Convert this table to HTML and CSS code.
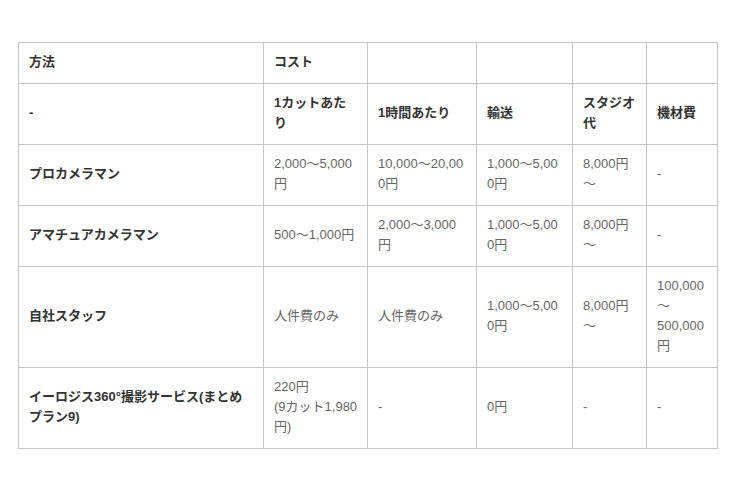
FILE: index.html
```html
<!DOCTYPE html>
<html lang="ja">
<head>
<meta charset="utf-8">
<link rel="stylesheet" href="styles.css">
</head>
<body>
<div class="page">
<table class="cost">
<colgroup>
<col class="c1"><col class="c2"><col class="c3"><col class="c4"><col class="c5"><col class="c6">
</colgroup>
<tr><th>方法</th><th>コスト</th><th></th><th></th><th></th><th></th></tr>
<tr><th>-</th><th>1カットあた<br>り</th><th>1時間あたり</th><th>輸送</th><th>スタジオ<br>代</th><th>機材費</th></tr>
<tr><th>プロカメラマン</th><td>2,000〜5,000<br>円</td><td>10,000〜20,00<br>0円</td><td>1,000〜5,00<br>0円</td><td>8,000円<br>〜</td><td>-</td></tr>
<tr><th>アマチュアカメラマン</th><td>500〜1,000円</td><td>2,000〜3,000<br>円</td><td>1,000〜5,00<br>0円</td><td>8,000円<br>〜</td><td>-</td></tr>
<tr><th>自社スタッフ</th><td>人件費のみ</td><td>人件費のみ</td><td>1,000〜5,00<br>0円</td><td>8,000円<br>〜</td><td>100,000<br>〜<br>500,000<br>円</td></tr>
<tr><th>イーロジス360°撮影サービス(まとめ<br>プラン9)</th><td>220円<br>(9カット1,980<br>円)</td><td>-</td><td>0円</td><td>-</td><td>-</td></tr>
</table>
</div>
</body>
</html>
```
FILE: styles.css
```css
html, body {
  margin: 0;
  padding: 0;
  background: #fff;
}
.page {
  padding: 42px 0 0 18px;
}
.cost {
  border-collapse: collapse;
  table-layout: fixed;
  width: 699px;
  font-family: "Liberation Sans", "Noto Sans CJK JP", sans-serif;
  font-size: 13px;
  line-height: 20px;
}
.c1 { width: 245px; }
.c2 { width: 104px; }
.c3 { width: 109px; }
.c4 { width: 96px; }
.c5 { width: 74px; }
.c6 { width: 71px; }
.cost th, .cost td {
  border: 1px solid #c4c4c4;
  padding: 9px 10px 11px 10px;
  text-align: left;
  vertical-align: middle;
  white-space: nowrap;
  overflow: hidden;
}
.cost th {
  font-weight: bold;
  color: #333;
}
.cost td {
  font-weight: normal;
  color: #666;
}
.cost tr:first-child th {
  height: 20px;
}
```
